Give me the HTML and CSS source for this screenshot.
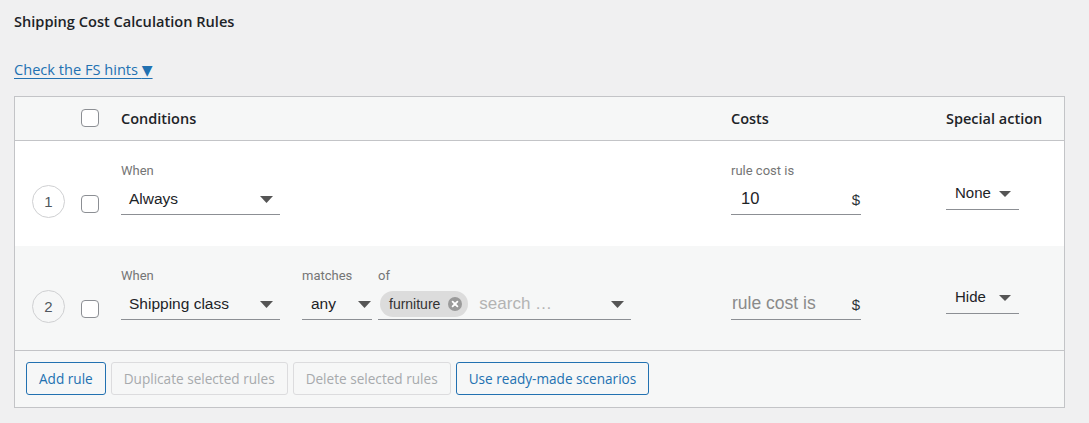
FILE: index.html
```html
<!DOCTYPE html>
<html lang="en">
<head>
<meta charset="utf-8">
<title>Shipping Cost Calculation Rules</title>
<link rel="stylesheet" href="styles.css">
</head>
<body>
<div class="page">
  <h2 class="title">Shipping Cost Calculation Rules</h2>
  <p class="hints-line"><a class="hints" href="#">Check the FS hints <span class="tri">▼</span></a></p>

  <div class="rules">
    <div class="row head">
      <div class="c-num"></div>
      <div class="c-check"><span class="cb"></span></div>
      <div class="c-cond">Conditions</div>
      <div class="c-cost">Costs</div>
      <div class="c-action">Special action</div>
    </div>

    <div class="row rule odd">
      <div class="c-num"><span class="num">1</span></div>
      <div class="c-check"><span class="cb"></span></div>
      <div class="c-cond">
        <div class="field">
          <span class="lbl">When</span>
          <div class="sel w-when"><span class="val">Always</span><svg class="arrow" width="13" height="7" viewBox="0 0 13 7"><path d="M0 0H13L6.5 7Z"/></svg></div>
        </div>
      </div>
      <div class="c-cost">
        <div class="field">
          <span class="lbl">rule cost is</span>
          <div class="cost"><span class="cost-val">10</span><span class="cur">$</span></div>
        </div>
      </div>
      <div class="c-action">
        <div class="sel act"><span class="val">None</span><svg class="arrow" width="12" height="6" viewBox="0 0 12 6"><path d="M0 0H12L6 6Z"/></svg></div>
      </div>
    </div>

    <div class="row rule even">
      <div class="c-num"><span class="num">2</span></div>
      <div class="c-check"><span class="cb"></span></div>
      <div class="c-cond conds">
        <div class="field">
          <span class="lbl">When</span>
          <div class="sel w-when"><span class="val">Shipping class</span><svg class="arrow" width="13" height="7" viewBox="0 0 13 7"><path d="M0 0H13L6.5 7Z"/></svg></div>
        </div>
        <div class="field">
          <span class="lbl">matches</span>
          <div class="sel w-match"><span class="val">any</span><svg class="arrow" width="13" height="7" viewBox="0 0 13 7"><path d="M0 0H13L6.5 7Z"/></svg></div>
        </div>
        <div class="field">
          <span class="lbl">of</span>
          <div class="sel w-of">
            <span class="chip">furniture<span class="chip-x"><svg width="14" height="14" viewBox="0 0 14 14"><circle cx="7" cy="7" r="7" fill="#9a9a9a"/><path d="M4.6 4.6L9.4 9.4M9.4 4.6L4.6 9.4" stroke="#fff" stroke-width="1.8" stroke-linecap="round"/></svg></span></span>
            <span class="search">search …</span>
            <svg class="arrow" width="13" height="7" viewBox="0 0 13 7"><path d="M0 0H13L6.5 7Z"/></svg>
          </div>
        </div>
      </div>
      <div class="c-cost">
        <div class="field">
          <span class="lbl lbl-empty"></span>
          <div class="cost"><span class="cost-ph">rule cost is</span><span class="cur">$</span></div>
        </div>
      </div>
      <div class="c-action">
        <div class="sel act"><span class="val">Hide</span><svg class="arrow" width="12" height="6" viewBox="0 0 12 6"><path d="M0 0H12L6 6Z"/></svg></div>
      </div>
    </div>

    <div class="foot">
      <button class="btn primary">Add rule</button>
      <button class="btn disabled">Duplicate selected rules</button>
      <button class="btn disabled">Delete selected rules</button>
      <button class="btn primary">Use ready-made scenarios</button>
    </div>
  </div>
</div>
</body>
</html>
```

FILE: styles.css
```css
* { box-sizing: border-box; }

html, body {
  margin: 0;
  padding: 0;
  background: #f0f0f1;
}

body {
  font-family: "Open Sans", "Noto Sans", sans-serif;
  color: #1d2327;
  font-size: 13px;
}

.page {
  padding: 11px 14px 0 14px;
}

.title {
  margin: 0;
  font-size: 14.6px;
  line-height: 20px;
  font-weight: 600;
}

.hints-line {
  margin: 27px 0 0 0;
  line-height: 22px;
  height: 22px;
}

.hints {
  color: #2271b1;
  font-size: 14.6px;
  text-decoration: underline;
  text-underline-offset: 3px;
}

.tri {
  font-family: "DejaVu Sans", sans-serif;
  font-size: 14px;
}

.rules {
  margin-top: 16px;
  width: 1051px;
  border: 1px solid #c3c4c7;
  background: #fff;
}

.row {
  display: grid;
  grid-template-columns: 66px 40px 610px 215px 1fr;
}

.head {
  height: 44px;
  align-items: center;
  background: #f6f7f7;
  border-bottom: 1px solid #c3c4c7;
  font-weight: 600;
  font-size: 14.5px;
}

.head .cb { margin-top: -1px; }

.rule {
  height: 105px;
}

.odd { background: #fff; }
.even { background: #f6f7f7; height: 104px; }

.num {
  display: flex;
  align-items: center;
  justify-content: center;
  width: 33px;
  height: 33px;
  margin: 44px 0 0 17px;
  border: 1px solid #cfd0d2;
  border-radius: 50%;
  font-family: "Liberation Sans", Arial, sans-serif;
  font-size: 15px;
  color: #50575e;
}

.cb {
  display: block;
  width: 18px;
  height: 18px;
  border: 1px solid #8c8f94;
  border-radius: 4px;
  background: #fff;
}

.rule .cb { margin-top: 54px; }

.rule .c-cond, .rule .c-cost { padding-top: 22px; }

.conds {
  display: flex;
}

.field {
  display: flex;
  flex-direction: column;
}

.lbl {
  font-family: "Roboto", "Liberation Sans", sans-serif;
  font-size: 13px;
  line-height: 15px;
  height: 15px;
  color: #757575;
}

.sel {
  position: relative;
  display: flex;
  align-items: center;
  height: 32px;
  margin-top: 5px;
  border-bottom: 1px solid #8c8f94;
  font-family: "Liberation Sans", Arial, sans-serif;
  color: #1d2327;
}

.sel .val {
  font-size: 15.5px;
  padding-left: 8px;
}

.arrow {
  position: absolute;
  right: 7px;
  top: 13px;
  fill: #555;
}

.w-when { width: 159px; margin-right: 22px; }
.w-match { width: 70px; margin-right: 6px; }
.w-match .val { padding-left: 9px; }
.w-match .arrow { right: 1px; }
.w-of { width: 253px; }
.w-of .arrow { right: 7px; }

.chip {
  display: inline-flex;
  align-items: center;
  height: 26px;
  margin-left: 2px;
  padding: 0 6px 0 9px;
  border-radius: 13px;
  background: #dcdcdc;
  font-size: 14px;
  color: #333;
}

.chip-x {
  display: inline-flex;
  margin-left: 8px;
}

.search {
  margin-left: 11px;
  font-size: 17px;
  color: #b3b3b3;
}

.cost {
  position: relative;
  width: 130px;
  height: 32px;
  margin-top: 5px;
  display: flex;
  align-items: center;
  border-bottom: 1px solid #8c8f94;
  font-family: "Liberation Sans", Arial, sans-serif;
}

.cost-val {
  font-size: 16.5px;
  padding-left: 10px;
  color: #1d2327;
}

.cost-ph {
  font-size: 17.5px;
  color: #8a8a8a;
  padding-left: 1px;
}

.cur {
  position: absolute;
  right: 1px;
  top: 8px;
  font-size: 15px;
  color: #2c3338;
}

.rule .c-action {
  display: flex;
  align-items: center;
}

.act {
  width: 73px;
  margin-top: 0;
}

.act .val {
  font-size: 15px;
  padding-left: 9px;
  margin-top: -2px;
}

.act .arrow {
  right: 8px;
  top: 13px;
}

.foot {
  display: flex;
  gap: 5px;
  padding: 11px 11px 12px 11px;
  border-top: 1px solid #c3c4c7;
  background: #f6f7f7;
}

.btn {
  height: 33px;
  padding: 0 12px;
  border-radius: 3px;
  font-family: "Open Sans", "Noto Sans", sans-serif;
  font-size: 13.6px;
  font-weight: 500;
  background: #f6f7f7;
  cursor: pointer;
}

.primary {
  border: 1px solid #2271b1;
  color: #2271b1;
}

.disabled {
  border: 1px solid #dcdcde;
  color: #a7aaad;
}
```
